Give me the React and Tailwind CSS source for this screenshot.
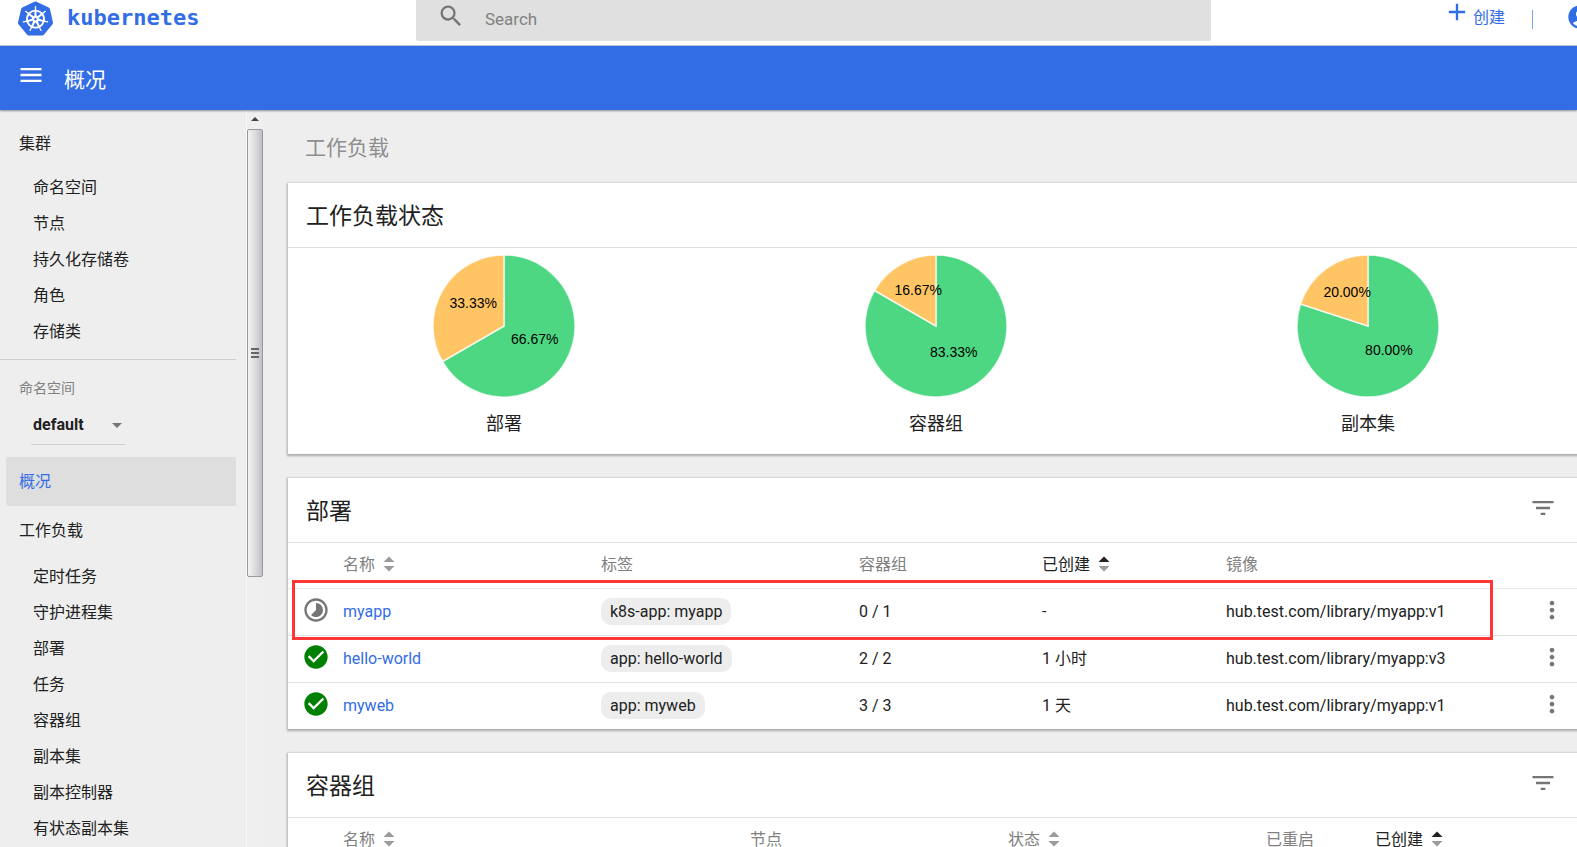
import React, { useState } from "react";
import {
  MdAccountCircle,
  MdAdd,
  MdArrowDropDown,
  MdCheckCircle,
  MdFilterList,
  MdMenu,
  MdMoreVert,
  MdSearch,
  MdTimelapse,
} from "react-icons/md";
import { SiKubernetes } from "react-icons/si";

const clusterLinks = ["命名空间", "节点", "持久化存储卷", "角色", "存储类"];

const workloadLinks = [
  "定时任务",
  "守护进程集",
  "部署",
  "任务",
  "容器组",
  "副本集",
  "副本控制器",
  "有状态副本集",
];

const charts = [
  { name: "部署", running: 66.67 },
  { name: "容器组", running: 83.33 },
  { name: "副本集", running: 80 },
];

const deployments = [
  {
    name: "myapp",
    label: "k8s-app: myapp",
    pods: "0 / 1",
    created: "-",
    image: "hub.test.com/library/myapp:v1",
    pending: true,
  },
  {
    name: "hello-world",
    label: "app: hello-world",
    pods: "2 / 2",
    created: "1 小时",
    image: "hub.test.com/library/myapp:v3",
  },
  {
    name: "myweb",
    label: "app: myweb",
    pods: "3 / 3",
    created: "1 天",
    image: "hub.test.com/library/myapp:v1",
  },
];

const RADIUS = 71;

const polar = (percent, radius) => {
  const angle = (percent / 100) * 2 * Math.PI;
  return [72 + radius * Math.sin(angle), 72 - radius * Math.cos(angle)];
};

const Slice = ({ from, to, color }) => {
  const [x1, y1] = polar(from, RADIUS);
  const [x2, y2] = polar(to, RADIUS);
  const large = to - from > 50 ? 1 : 0;
  return (
    <path
      d={`M72 72L${x1} ${y1}A${RADIUS} ${RADIUS} 0 ${large} 1 ${x2} ${y2}Z`}
      fill={color}
      stroke="#fff"
      strokeWidth="1.5"
      strokeOpacity="0.75"
    />
  );
};

const SliceLabel = ({ from, to }) => {
  const [x, y] = polar((from + to) / 2, RADIUS / 2);
  return (
    <text x={x} y={y} textAnchor="middle" className="font-['Liberation_Sans',sans-serif] text-[14px]">
      {(to - from).toFixed(2)}%
    </text>
  );
};

const PieChart = ({ name, running }) => (
  <figure className="flex flex-1 flex-col items-center pt-[6px]">
    <svg width="144" height="144" viewBox="0 0 144 144" aria-label={name}>
      <Slice from={0} to={running} color="#4dd783" />
      <Slice from={running} to={100} color="#ffc564" />
      <SliceLabel from={0} to={running} />
      <SliceLabel from={running} to={100} />
    </svg>
    <figcaption className="mt-3 text-lg leading-7">{name}</figcaption>
  </figure>
);

const SortIcon = ({ active }) => (
  <svg width="12" height="16" viewBox="0 0 12 16" className="-mt-[3px]" aria-hidden="true">
    <path d="M0.500 6L6 0.500L11.500 6Z" fill={active ? "#212121" : "#9b9b9b"} />
    <path d="M0.500 10L6 15.500L11.500 10Z" fill="#9b9b9b" />
  </svg>
);

const Th = ({ children, sortable, active }) => (
  <th className={`p-0 text-left font-normal ${active ? "text-[#212121]" : "text-[#808080]"}`}>
    {sortable ? (
      <button className="flex items-center gap-2">
        {children}
        <SortIcon active={active} />
      </button>
    ) : (
      children
    )}
  </th>
);

const Card = ({ title, filter, children }) => (
  <section className="relative bg-white shadow-[0_1px_2px_1px_rgba(0,0,0,0.28)]">
    <div className="flex h-[65px] items-center justify-between border-b border-[#e0e0e0] pr-[27px] pl-[18px]">
      <h3 className="pt-[3px] text-[23px] leading-8">{title}</h3>
      {filter && (
        <button aria-label="filter" className="-mt-1 text-[#757575]">
          <MdFilterList size={28} />
        </button>
      )}
    </div>
    {children}
  </section>
);

const NavList = ({ items }) => (
  <ul>
    {items.map((item) => (
      <li key={item}>
        <a href="#" className="flex h-9 items-center pl-[33px]">
          {item}
        </a>
      </li>
    ))}
  </ul>
);

const Scrollbar = () => (
  <div className="flex w-[17px] shrink-0 flex-col items-center border-l border-[#f8f8f8] bg-[#efefef]" aria-hidden="true">
    <svg width="16" height="19" viewBox="0 0 16 19">
      <path d="M4 11L8 7L12 11Z" fill="#444" />
    </svg>
    <div className="flex h-[448px] w-4 flex-col items-center justify-center gap-0.5 rounded-xs border border-[#999] bg-linear-to-r from-[#f4f4f4] via-[#dcdce0] to-[#bfbfc6]">
      <span className="h-0.5 w-2 bg-[#666]" />
      <span className="h-0.5 w-2 bg-[#666]" />
      <span className="h-0.5 w-2 bg-[#666]" />
    </div>
  </div>
);

const Sidebar = () => {
  const [namespace, setNamespace] = useState("default");

  return (
    <aside className="flex w-[263px] shrink-0 overflow-hidden">
      <nav className="min-w-0 flex-1 pt-[9px] pr-[10px]">
        <a href="#" className="flex h-[49px] items-center pl-[19px]">
          集群
        </a>
        <div className="pt-0.5">
          <NavList items={clusterLinks} />
        </div>
        <hr className="mt-[9px] border-[#cfcfcf]" />

        <label htmlFor="namespace" className="mt-[18px] block pl-[19px] text-sm leading-5 text-[#808080]">
          命名空间
        </label>
        <div className="relative mt-2 ml-[31px] w-[94px] border-b border-[#d0d0d0]">
          <select
            id="namespace"
            value={namespace}
            onChange={(e) => setNamespace(e.target.value)}
            className="h-[38px] w-full appearance-none pl-[2px] font-bold"
          >
            <option>default</option>
          </select>
          <MdArrowDropDown size={24} className="pointer-events-none absolute top-[7px] -right-1 text-[#757575]" />
        </div>

        <a href="#" className="mt-3 ml-[6px] flex h-[49px] items-center rounded-xs bg-[#dedede] pl-[13px] text-[#326de6]">
          概况
        </a>
        <a href="#" className="flex h-[49px] items-center pl-[19px]">
          工作负载
        </a>
        <div className="pt-1">
          <NavList items={workloadLinks} />
        </div>
      </nav>
      <Scrollbar />
    </aside>
  );
};

const App = () => {
  return (
    <div className="flex h-screen flex-col overflow-hidden bg-[#eee] font-[Roboto,'Noto_Sans_CJK_SC',sans-serif] text-base text-[#212121]">
      <header className="-mr-[17px] flex h-[46px] shrink-0 items-start border-b border-[#c4c8d4] bg-white text-[#326de6]">
        <a href="#" className="flex w-[416px] items-center gap-[14px] pl-[18px]">
          <SiKubernetes size={35} />
          <span className="font-['DejaVu_Sans_Mono',monospace] text-[22px] leading-9 font-bold">kubernetes</span>
        </a>
        <label className="flex h-[41px] flex-1 items-center rounded-b-xs bg-[#e0e0e0] pb-1 pl-[21px] text-[#757575]">
          <MdSearch size={28} className="-mt-[6px]" />
          <input
            type="text"
            placeholder="Search"
            className="ml-5 h-9 flex-1 text-[17px] outline-none placeholder:text-[#808080]"
          />
        </label>
        <div className="flex w-[383px] items-start justify-end">
          <button className="flex items-start gap-0.5">
            <MdAdd size={28} className="-mt-[2px]" />
            <span className="pt-[6px] leading-6">创建</span>
          </button>
          <span className="mt-[10px] ml-[27px] h-[19px] w-px bg-[#7a9ff0]" />
          <button aria-label="account" className="mt-[3px] ml-[33px]">
            <MdAccountCircle size={28} />
          </button>
        </div>
      </header>

      <div className="z-10 flex h-16 shrink-0 items-center bg-[#326de6] pl-[17px] text-white shadow-[0_1px_2px_rgba(0,0,0,0.4)]">
        <button aria-label="menu" className="-mt-[6px]">
          <MdMenu size={28} />
        </button>
        <h1 className="ml-[19px] pt-[3px] text-[21px] leading-8">概况</h1>
      </div>

      <div className="flex min-h-0 flex-1">
        <Sidebar />
        <main className="-mr-[7px] min-w-0 flex-1 pl-[25px]">
          <h2 className="pt-[22px] pb-[19px] pl-[17px] text-[21px] leading-8 text-[#8f8f8f]">工作负载</h2>

          <div className="flex flex-col gap-6">
            <Card title="工作负载状态">
              <div className="flex pb-4">
                {charts.map((chart) => (
                  <PieChart key={chart.name} {...chart} />
                ))}
              </div>
            </Card>

            <Card title="部署" filter>
              <table className="w-full table-fixed border-collapse">
                <colgroup>
                  <col className="w-[55px]" />
                  <col className="w-[258px]" />
                  <col className="w-[258px]" />
                  <col className="w-[183px]" />
                  <col className="w-[184px]" />
                  <col />
                  <col className="w-[46px]" />
                </colgroup>
                <thead>
                  <tr className="h-[45px] border-b border-[#e8e8e8]">
                    <Th />
                    <Th sortable>名称</Th>
                    <Th>标签</Th>
                    <Th>容器组</Th>
                    <Th sortable active>
                      已创建
                    </Th>
                    <Th>镜像</Th>
                    <Th />
                  </tr>
                </thead>
                <tbody>
                  {deployments.map((item) => (
                    <tr key={item.name} className="h-[47px] border-b border-[#e0e0e0] last:border-b-0">
                      <td className="p-0 pl-[14px]">
                        {item.pending ? (
                          <MdTimelapse size={28} className="-mt-[3px] text-[#757575]" />
                        ) : (
                          <MdCheckCircle size={28} className="-mt-[3px] text-[#008000]" />
                        )}
                      </td>
                      <td className="p-0">
                        <a href="#" className="text-[#326de6]">
                          {item.name}
                        </a>
                      </td>
                      <td className="p-0">
                        <span className="inline-block rounded-[10px] bg-[#ededed] px-[9px] align-middle leading-[27px]">
                          {item.label}
                        </span>
                      </td>
                      <td className="p-0">{item.pods}</td>
                      <td className="p-0">{item.created}</td>
                      <td className="p-0">{item.image}</td>
                      <td className="p-0">
                        <button aria-label="actions" className="-mt-[3px] block text-[#757575]">
                          <MdMoreVert size={28} />
                        </button>
                      </td>
                    </tr>
                  ))}
                </tbody>
              </table>
              {/* riquadro rosso attorno a myapp */}
              <div className="pointer-events-none absolute top-[102px] right-[91px] left-1 h-[60px] border-3 border-[#fd3636]" />
            </Card>

            <Card title="容器组" filter>
              <table className="w-full table-fixed border-collapse">
                <colgroup>
                  <col className="w-[55px]" />
                  <col className="w-[407px]" />
                  <col className="w-[258px]" />
                  <col className="w-[258px]" />
                  <col className="w-[109px]" />
                  <col />
                </colgroup>
                <thead>
                  <tr className="h-[45px] border-b border-[#e8e8e8]">
                    <Th />
                    <Th sortable>名称</Th>
                    <Th>节点</Th>
                    <Th sortable>状态</Th>
                    <Th>已重启</Th>
                    <Th sortable active>
                      已创建
                    </Th>
                  </tr>
                </thead>
              </table>
            </Card>
          </div>
        </main>
      </div>
    </div>
  );
};

export default App;
